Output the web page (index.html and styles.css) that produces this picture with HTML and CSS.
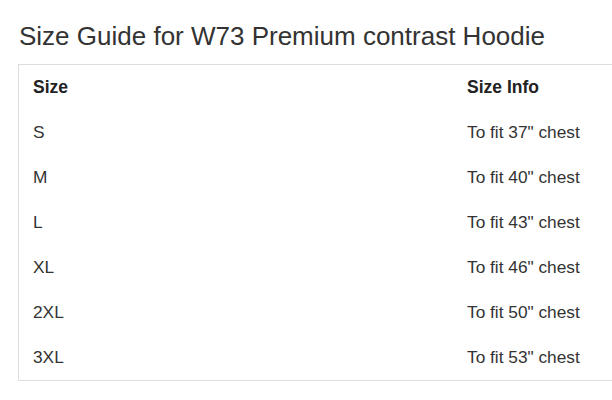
FILE: index.html
```html
<!DOCTYPE html>
<html>
<head>
<meta charset="utf-8">
<link rel="stylesheet" href="styles.css">
</head>
<body>
<div class="page">
  <h1 class="title">Size Guide for W73 Premium contrast Hoodie</h1>
  <div class="box">
    <table class="sizes">
      <thead>
        <tr><th class="c1">Size</th><th class="c2">Size Info</th></tr>
      </thead>
      <tbody>
        <tr><td>S</td><td>To fit 37" chest</td></tr>
        <tr><td>M</td><td>To fit 40" chest</td></tr>
        <tr><td>L</td><td>To fit 43" chest</td></tr>
        <tr><td>XL</td><td>To fit 46" chest</td></tr>
        <tr><td>2XL</td><td>To fit 50" chest</td></tr>
        <tr><td>3XL</td><td>To fit 53" chest</td></tr>
      </tbody>
    </table>
  </div>
</div>
</body>
</html>
```
FILE: styles.css
```css
html, body {
  margin: 0;
  padding: 0;
  background: #fff;
  overflow: hidden;
}
.page {
  padding: 22px 0 0 18px;
  font-family: "Liberation Sans", Arial, sans-serif;
  color: #333;
  width: 800px;
}
.title {
  margin: 0 0 13px 1px;
  font-size: 26px;
  font-weight: normal;
  line-height: 29px;
  color: #333;
}
.box {
  border: 1px solid #ddd;
  width: 760px;
}
.sizes {
  border-collapse: collapse;
  width: 100%;
  font-size: 17.3px;
}
.sizes th, .sizes td {
  text-align: left;
  height: 45px;
  padding: 0 14px;
  vertical-align: middle;
  box-sizing: border-box;
}
.sizes th {
  font-weight: bold;
  font-size: 17.5px;
  color: #222;
}
.sizes .c1 {
  width: 434px;
}
```
